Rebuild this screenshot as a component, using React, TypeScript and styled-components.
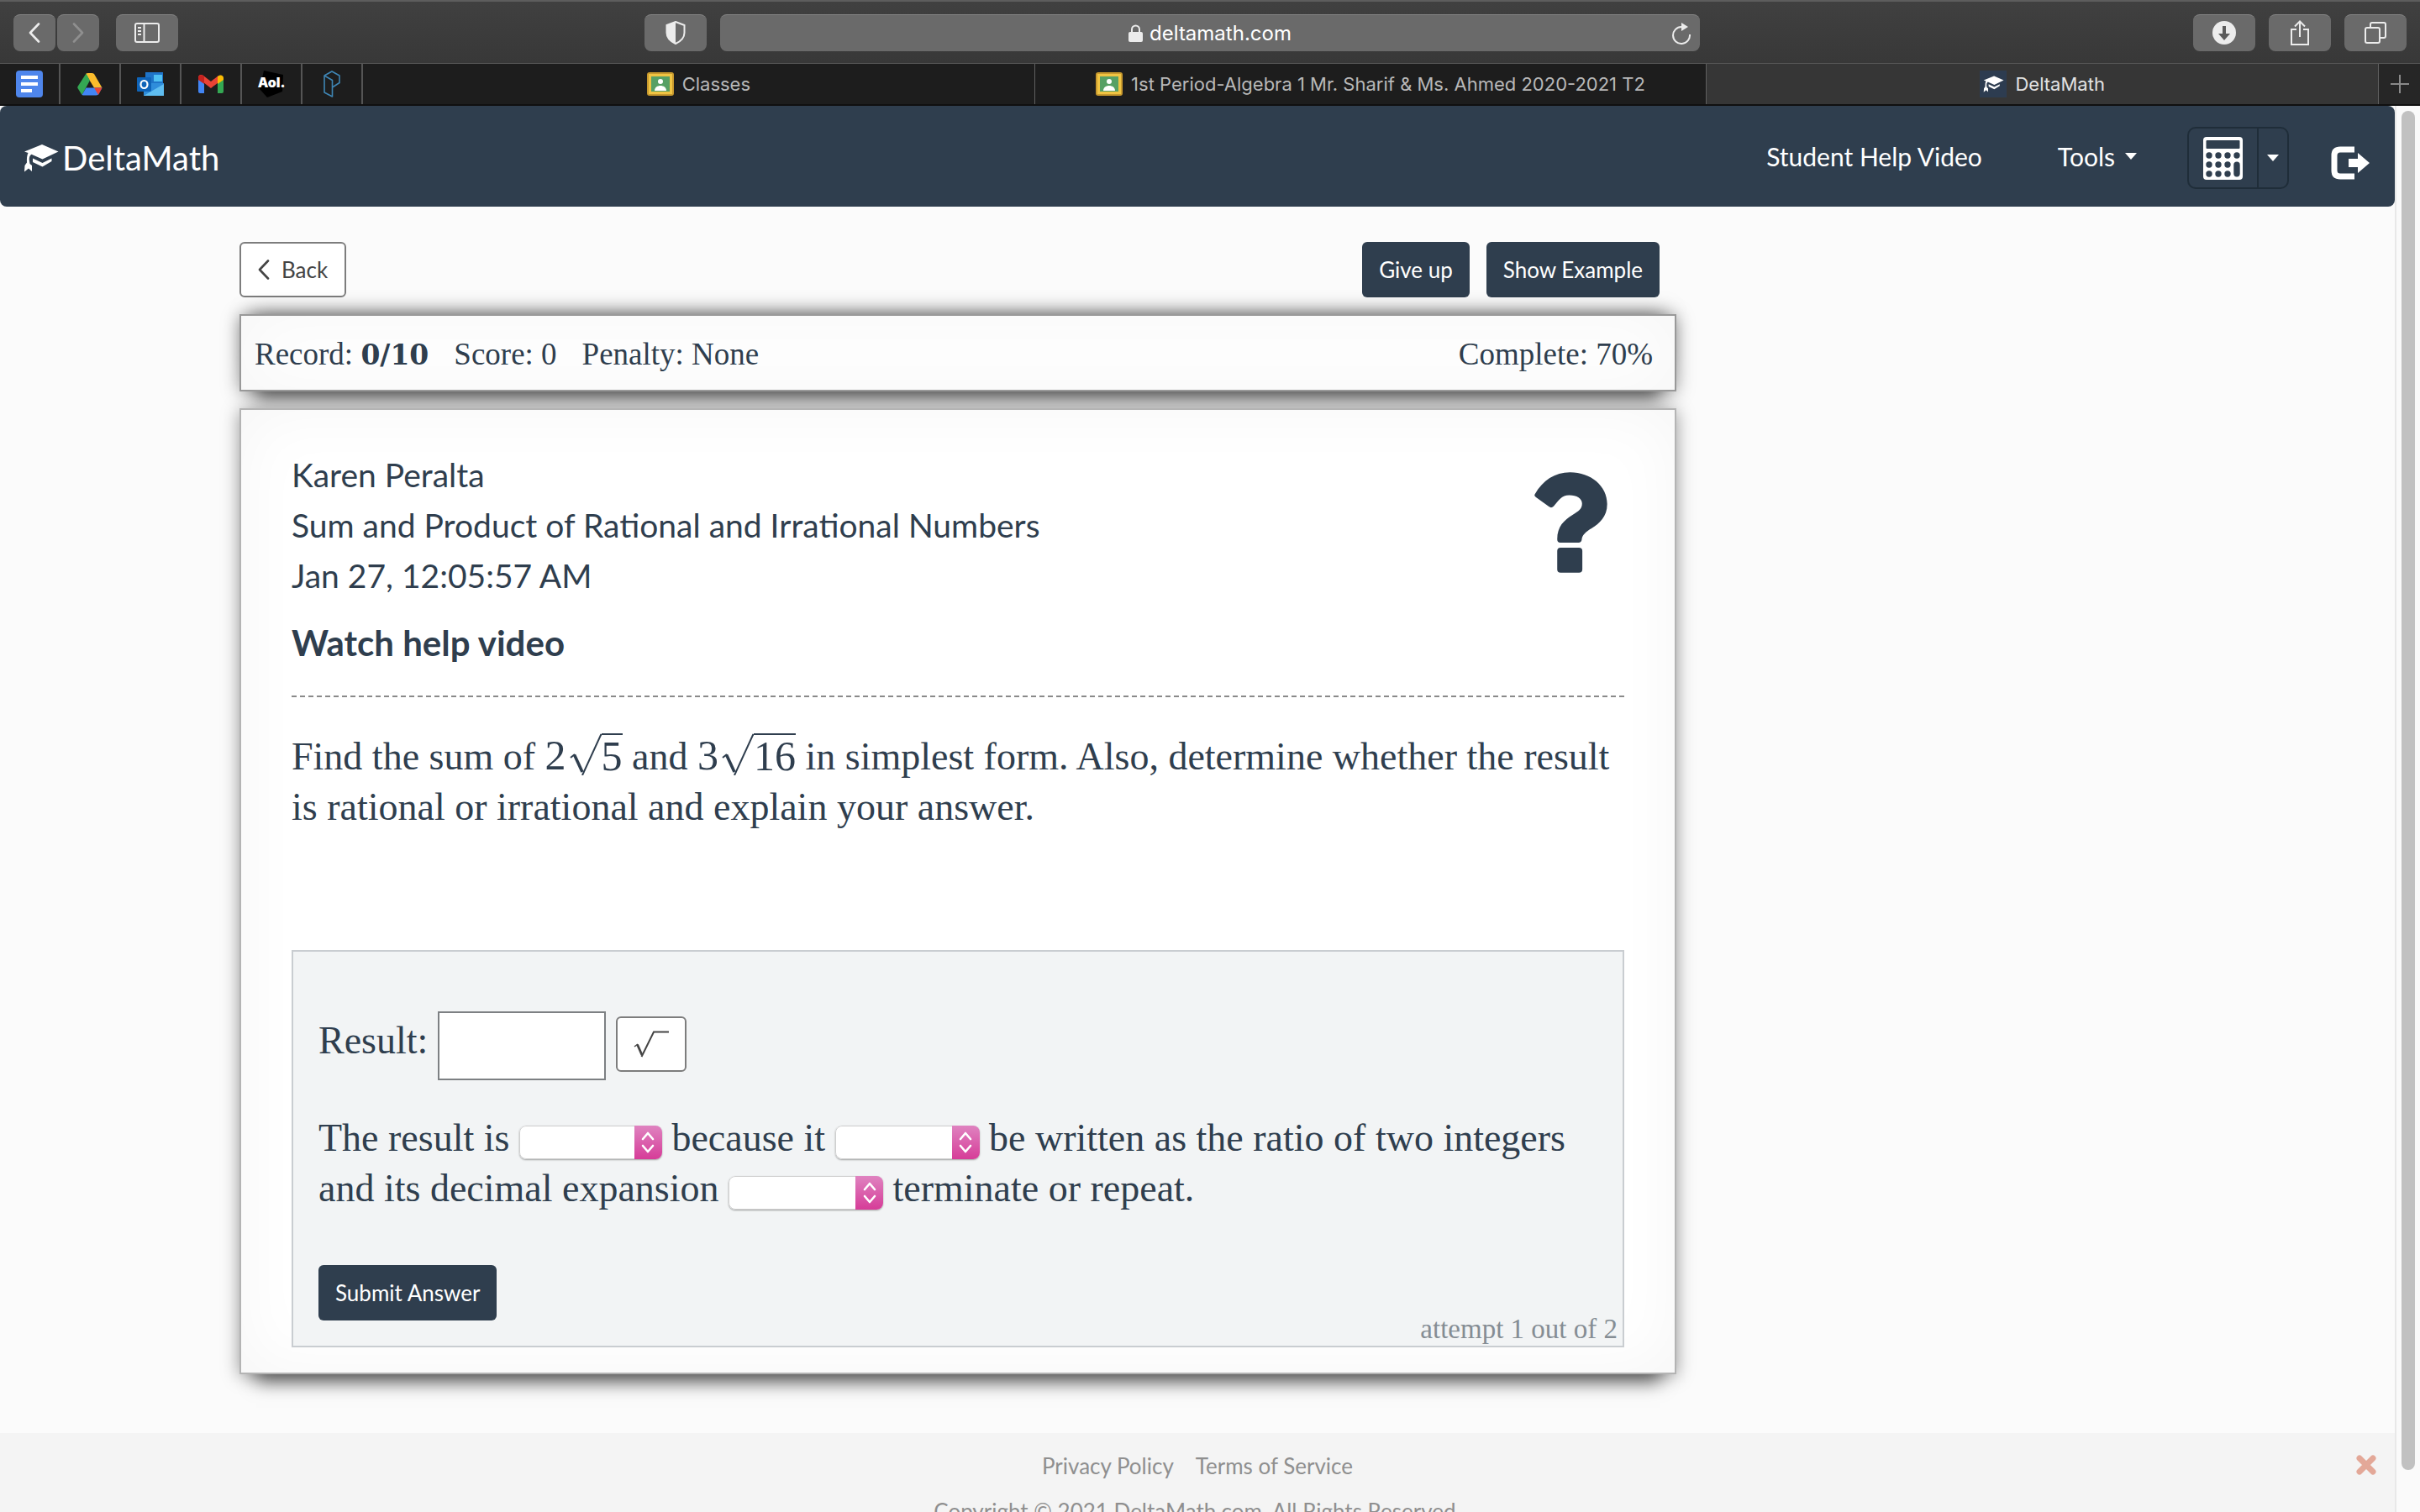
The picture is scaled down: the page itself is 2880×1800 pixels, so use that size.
import React from "react";
import styled, { createGlobalStyle } from "styled-components";

const navy = "#2f3e4e";
const sans = `Lato, "Liberation Sans", sans-serif`;
const serif = `"Liberation Serif", "DejaVu Serif", serif`;
const system = `Inter, "Liberation Sans", sans-serif`;

const GlobalStyle = createGlobalStyle`
  *, *::before, *::after { box-sizing: border-box; }
  body { margin: 0; font-family: ${sans}; color: ${navy}; background: #fbfbfb; }
  button, input, select { font: inherit; margin: 0; }
  svg { display: block; flex: none; }
  a { color: inherit; text-decoration: none; }
  p, h1 { margin: 0; font-weight: 400; }
`;

const Browser = styled.div`
  display: flex;
  flex-direction: column;
  height: 100vh;
  overflow: hidden;
`;

const Toolbar = styled.header`
  display: grid;
  grid-template-columns: 1fr auto 1fr;
  gap: 16px;
  align-items: center;
  padding: 0 16px;
  height: 76px;
  border-top: 2px solid #5d5d5d;
  border-bottom: 1px solid #565656;
  background: linear-gradient(#404040, #383838);
  font-family: ${system};
`;

const Group = styled.div<{ $gap: number; $end?: boolean }>`
  display: flex;
  align-items: center;
  gap: ${(p) => p.$gap}px;
  justify-content: ${(p) => (p.$end ? "flex-end" : "flex-start")};
`;

const Spacer = styled.span`
  flex: 1;
`;

const ToolButton = styled.button<{ $width: number }>`
  display: flex;
  align-items: center;
  justify-content: center;
  width: ${(p) => p.$width}px;
  height: 44px;
  padding: 0;
  border: 0;
  border-top: 1px solid #868686;
  border-radius: 8px;
  background: #6a6a6a;
  color: #ececec;
`;

const AddressBar = styled.div`
  display: grid;
  grid-template-columns: 1fr auto 1fr;
  align-items: center;
  width: 1166px;
  height: 44px;
  padding: 0 10px;
  border-top: 1px solid #868686;
  border-radius: 8px;
  background: #6a6a6a;
  color: #fff;
  font-size: 24px;
`;

const Reload = styled.button`
  justify-self: end;
  padding: 0;
  border: 0;
  background: none;
  color: #ececec;
`;

const TabBar = styled.nav`
  display: flex;
  height: 50px;
  border-bottom: 2px solid #101010;
  background: #1d1d1d;
  font-family: ${system};
  font-size: 22px;
`;

const PinnedTab = styled.a`
  display: flex;
  align-items: center;
  justify-content: center;
  width: 72px;
  border-right: 2px solid #555;
`;

const Tab = styled.a<{ $active?: boolean }>`
  display: flex;
  flex: 1;
  align-items: center;
  justify-content: center;
  gap: 10px;
  border-right: 1px solid #606060;
  background: ${(p) => (p.$active ? "#363636" : "transparent")};
  color: ${(p) => (p.$active ? "#e2e2e2" : "#b8b8b8")};
`;

const NewTab = styled.button`
  display: flex;
  align-items: center;
  justify-content: center;
  width: 49px;
  padding: 0;
  border: 0;
  background: #262626;
  color: #8a8a8a;
`;

const Viewport = styled.div`
  display: flex;
  flex: 1;
  min-height: 0;
`;

const Page = styled.div`
  display: flex;
  flex: 1;
  flex-direction: column;
  overflow: hidden;
`;

const ScrollTrack = styled.div`
  width: 30px;
  padding: 6px 6px 0 6px;
  border-left: 2px solid #e8e8e8;
  background: #fafafa;
`;

const ScrollThumb = styled.div`
  height: 97%;
  border-radius: 8px;
  background: #c1c1c1;
`;

const Navbar = styled.nav`
  display: flex;
  flex: none;
  align-items: center;
  height: 120px;
  padding: 0 30px 0 28px;
  border-radius: 8px;
  background: ${navy};
  color: #fff;
  font-size: 30px;
`;

const Brand = styled.a`
  display: flex;
  align-items: center;
  gap: 4px;
  margin-right: auto;
  padding-top: 4px;
  font-size: 40px;
`;

const NavLink = styled.a`
  display: flex;
  align-items: center;
  gap: 12px;
  margin-right: 90px;
`;

const ToolsLink = styled(NavLink)`
  margin-right: 60px;
`;

const CalcGroup = styled.div`
  display: flex;
  height: 74px;
  margin: 4px 50px 0 0;
  border: 2px solid #1f2d39;
  border-radius: 10px;
`;

const CalcButton = styled.button<{ $width: number }>`
  display: flex;
  align-items: center;
  justify-content: center;
  width: ${(p) => p.$width}px;
  padding: 0;
  border: 0;
  background: none;
  color: #fff;

  & + & { border-left: 2px solid #1f2d39; }
`;

const LogoutLink = styled.a`
  padding-top: 16px;
`;

const Content = styled.main`
  flex: none;
  width: 60%;
  margin: 42px 0 70px 10%;
`;

const Actions = styled.div`
  display: flex;
  gap: 20px;
  padding-right: 20px;
  margin-bottom: 20px;
`;

const Button = styled.button`
  height: 66px;
  padding: 0 20px;
  border: 0;
  border-radius: 6px;
  background: ${navy};
  color: #fff;
  font-family: ${sans};
  font-size: 26px;
  white-space: nowrap;
`;

const OutlineButton = styled(Button)`
  display: flex;
  align-items: center;
  gap: 14px;
  border: 2px solid #7d7d7d;
  background: #fff;
  color: #444;
`;

const BackButton = styled(OutlineButton)`
  margin-right: auto;
`;

const RecordBar = styled.section`
  position: relative;
  display: flex;
  align-items: center;
  gap: 30px;
  height: 92px;
  margin-bottom: 20px;
  padding: 3px 26px 0 16px;
  border: 2px solid #999;
  background: #fff;
  box-shadow: 0 30px 20px -20px rgba(0, 0, 0, 0.5), 0 -14px 24px -14px rgba(0, 0, 0, 0.5),
    0 2px 20px rgba(0, 0, 0, 0.4), 0 0 80px rgba(0, 0, 0, 0.04) inset;
  font-family: ${serif};
  font-size: 37px;
`;

const Tally = styled.b`
  font-family: "DejaVu Serif", serif;
  font-size: 33px;
`;

const Complete = styled.span`
  margin-left: auto;
`;

const Card = styled.section`
  position: relative;
  padding: 47px 60px 30px;
  border: 2px solid #b4b4b4;
  background: #fff;
  box-shadow: 0 30px 20px -20px rgba(0, 0, 0, 0.5), 0 2px 20px rgba(0, 0, 0, 0.4),
    0 0 80px rgba(0, 0, 0, 0.04) inset;
`;

const CardHeader = styled.div`
  display: flex;
  justify-content: space-between;
  padding-bottom: 33px;
  border-bottom: 2px dashed #8a8a8a;
  font-size: 39px;
  line-height: 60px;
`;

const Title = styled.h1`
  font-size: 39px;
`;

const HelpLink = styled.a`
  display: block;
  margin-top: 20px;
  font-size: 42px;
  font-weight: 700;
`;

const HelpButton = styled.button`
  align-self: flex-start;
  margin: 27px 20px 0 0;
  padding: 0;
  border: 0;
  background: none;
  color: ${navy};
`;

const Question = styled.p`
  margin: 41px 0 140px;
  font-family: ${serif};
  font-size: 46px;
  line-height: 60px;
`;

const MathTerm = styled.span`
  font-size: 50px;
  line-height: 50px;
  white-space: nowrap;
`;

const Radical = styled.span`
  display: inline-flex;
  align-items: flex-start;
  height: 50px;
  margin-left: 4px;
  vertical-align: -7px;
`;

const Radicand = styled.span`
  border-top: 2px solid ${navy};
`;

const AnswerBox = styled.form`
  border: 2px solid #c9cdd1;
  background: #f2f4f5;
  padding: 71px 6px 0 30px;
  font-family: ${serif};
  font-size: 46px;
  line-height: 60px;
`;

const ResultRow = styled.div`
  display: flex;
  align-items: flex-start;
  gap: 12px;
`;

const ResultLabel = styled.label`
  line-height: 70px;
`;

const ResultInput = styled.input`
  width: 200px;
  height: 82px;
  padding: 0 12px;
  border: 2px solid #7d8083;
  background: #fff;
`;

const RootButton = styled(OutlineButton)`
  width: 84px;
  margin-top: 6px;
  justify-content: center;
`;

const Sentence = styled.p`
  margin: 39px 0 61px;
`;

const SelectWrap = styled.span<{ $width: number }>`
  position: relative;
  display: inline-block;
  width: ${(p) => p.$width}px;
  height: 40px;
  vertical-align: -10px;
  border-radius: 8px;
  overflow: hidden;
  box-shadow: 0 1px 2px rgba(0, 0, 0, 0.35);
`;

const Select = styled.select`
  display: block;
  width: 100%;
  height: 100%;
  padding: 0 40px 0 10px;
  border: 1px solid #cfcfcf;
  border-radius: 8px;
  appearance: none;
  background: #fff;
  font-size: 24px;
`;

const SelectArrows = styled.span`
  position: absolute;
  inset: 0 0 0 auto;
  display: flex;
  align-items: center;
  justify-content: center;
  width: 33px;
  background: linear-gradient(#df83c0, #d63c98);
  pointer-events: none;
`;

const AnswerFooter = styled.div`
  display: flex;
  justify-content: space-between;
  height: 96px;
`;

const Attempt = styled.span`
  align-self: flex-end;
  color: #858d94;
  font-size: 33px;
  line-height: 40px;
`;

const Footer = styled.footer`
  display: grid;
  flex: 1;
  grid-template-columns: 1fr auto 1fr;
  align-items: start;
  padding: 12px 22px 0;
  background: #f4f4f4;
  color: #8f8f8f;
  font-size: 26px;
  line-height: 54px;
  text-align: center;
`;

const LegalLinks = styled.div`
  display: flex;
  justify-content: center;
  gap: 26px;
`;

const CloseButton = styled.button`
  justify-self: end;
  margin-top: 14px;
  padding: 0;
  border: 0;
  background: none;
  color: #e3a898;
`;

function Caret() {
  return (
    <svg width="14" height="8" viewBox="0 0 16 9" fill="currentColor" aria-hidden="true">
      <path d="M0 0h16L8 9z" />
    </svg>
  );
}

function Chevron({ flip, dim }: { flip?: boolean; dim?: boolean }) {
  return (
    <svg width="14" height="24" viewBox="0 0 14 24" fill="none" stroke={dim ? "#8f8f8f" : "currentColor"} strokeWidth="2.6" strokeLinecap="round" strokeLinejoin="round" aria-hidden="true">
      <path d={flip ? "M2 1.5 12 12 2 22.5" : "M12 1.5 2 12 12 22.5"} />
    </svg>
  );
}

function CapIcon({ width, height }: { width: number; height: number }) {
  return (
    <svg width={width} height={height} viewBox="0 0 42 34" fill="#fff" aria-hidden="true">
      <path d="M22 1 41.500 9.500 22.500 18.500 9.500 12.800Q6.500 14.500 6.800 19.500L7.500 24 10 26V33L6 29.500 1 33.500 1.500 26 4 22.500Q3.500 15 5.500 11L1 9.500z" />
      <path d="M11 17.500 22.500 23 33.500 17.500V21L22.500 27.500 11 22z" />
    </svg>
  );
}

function QuestionIcon() {
  return (
    <svg width="87" height="120" viewBox="797 876 262 360" fill="currentColor" aria-hidden="true">
      <path d="M799 954C828 905 870 876 925 876C1000 876 1058 925 1058 990C1058 1036 1030 1060 1002 1077C980 1090 968 1102 967 1117Q966 1128 955 1128H890Q879 1128 879 1116C879 1070 903 1048 935 1028C955 1015 968 1008 968 988C968 970 950 958 922 958C895 958 884 977 866 998Q858 1006 849 999L803 966Q795 961 799 954z" />
      <rect x="879" y="1146" width="90" height="90" rx="12" />
    </svg>
  );
}

function RootSign() {
  return (
    <svg width="38" height="50" viewBox="0 0 38 50" fill="none" stroke={navy} aria-hidden="true">
      <path d="M1 29 6 25" strokeWidth="2" />
      <path d="M5.500 25.500 15 46" strokeWidth="3.600" />
      <path d="M15 50 37.500 1" strokeWidth="2" />
    </svg>
  );
}

function RootKeyIcon() {
  return (
    <svg width="42" height="32" viewBox="0 0 42 32" fill="none" stroke="#444" aria-hidden="true">
      <path d="M1 19 5 16" strokeWidth="1.500" />
      <path d="M4.500 16.500 10 29" strokeWidth="2.800" />
      <path d="M9.500 31 24 1.500H42" strokeWidth="2" />
    </svg>
  );
}

function Root({ factor, radicand }: { factor: number; radicand: number }) {
  return (
    <MathTerm>
      {factor}
      <Radical>
        <RootSign />
        <Radicand>{radicand}</Radicand>
      </Radical>
    </MathTerm>
  );
}

function Choice({ label, width }: { label: string; width: number }) {
  return (
    <SelectWrap $width={width}>
      <Select aria-label={label} defaultValue="">
        <option value="" />
      </Select>
      <SelectArrows>
        <svg width="16" height="26" viewBox="0 0 16 26" fill="none" stroke="#fff" strokeWidth="2.600" strokeLinecap="round" strokeLinejoin="round" aria-hidden="true">
          <path d="M2 9 8 2l6 7M2 17l6 7 6-7" />
        </svg>
      </SelectArrows>
    </SelectWrap>
  );
}

function ClassroomIcon() {
  return (
    <svg width="32" height="28" viewBox="0 0 32 28" aria-hidden="true">
      <rect width="32" height="28" rx="3" fill="#c99a2e" />
      <rect x="2" y="2" width="28" height="24" fill="#f0c443" />
      <rect x="5" y="5" width="22" height="18" fill="#57a065" />
      <circle cx="16" cy="11" r="3" fill="#fff" />
      <path d="M9 22c0-8 14-8 14 0z" fill="#fff" />
    </svg>
  );
}

function PinnedTabs() {
  return (
    <>
      <PinnedTab href="#docs" aria-label="Docs">
        <svg width="32" height="32" viewBox="0 0 32 32"><rect width="32" height="32" rx="4" fill="#4f86ec" /><path d="M6 8h20M6 16h20M6 24h13" stroke="#fff" strokeWidth="4" /></svg>
      </PinnedTab>
      <PinnedTab href="#drive" aria-label="Drive">
        <svg width="30" height="27" viewBox="0 0 30 27"><path d="M10 1Q11 0 13 0h4q2 0 3 1l9.500 16.500H20z" fill="#fbbc2c" /><path d="M10.500 .500 15 8.700 5.500 26 .500 18Q0 17 .500 16z" fill="#34a853" /><path d="M5.500 26 10.500 17.500H29.500L25 25.500Q24 26.500 22 26.500H7z" fill="#4285f4" /><path d="M20 17.500H29.500L25 26z" fill="#ea4335" /></svg>
      </PinnedTab>
      <PinnedTab href="#outlook" aria-label="Outlook">
        <svg width="32" height="28" viewBox="0 0 32 28"><path d="M10 0h21v18H10z" fill="#1f74c8" /><path d="M20 3h10v8H20z" fill="#4fc0f2" /><path d="M8 13h24v15H8z" fill="#2f8ddb" /><path d="M8 28 32 14v14z" fill="#5fbdf0" /><rect y="6" width="17" height="17" rx="1" fill="#0f64b8" /><ellipse cx="8.500" cy="14.500" rx="4" ry="4.500" fill="none" stroke="#fff" strokeWidth="2.200" /></svg>
      </PinnedTab>
      <PinnedTab href="#gmail" aria-label="Gmail">
        <svg width="30" height="22" viewBox="0 0 30 22"><path d="M0 3v17a2 2 0 0 0 2 2h5V8z" fill="#4285f4" /><path d="M30 3v17a2 2 0 0 1-2 2h-5V8z" fill="#34a853" /><path d="M0 3.500C0 0 3.500-1 6 1l9 7 9-7v8l-9 7-9-7-6-4z" fill="#ea4335" /><path d="M23 2c3-3 7-1.500 7 2v2l-7 5z" fill="#fbbc04" /><path d="M0 3.500C0 0 4-1 7 2v9L0 6z" fill="#c5221f" /></svg>
      </PinnedTab>
      <PinnedTab href="#aol" aria-label="Aol">
        <svg width="34" height="32" viewBox="0 0 34 32"><path d="M8 0 31 5 30 25 12 32 3 22z" fill="#000" /><text x="17" y="20" fill="#fff" fontFamily="Inter, sans-serif" fontSize="16" fontWeight="900" textAnchor="middle">Aol.</text></svg>
      </PinnedTab>
      <PinnedTab href="#portal" aria-label="Portal">
        <svg width="20" height="32" viewBox="0 0 20 32" fill="none" stroke="#3f86b5" strokeWidth="1.600" strokeLinejoin="round"><path d="M1 6 10 1 19 6V14.500L10.500 20M1 6 10.500 11.500V31L1 26z" /></svg>
      </PinnedTab>
    </>
  );
}

function BrowserChrome() {
  return (
    <>
      <Toolbar>
        <Group $gap={20}>
          <Group $gap={2}>
            <ToolButton $width={50} aria-label="Back"><Chevron /></ToolButton>
            <ToolButton $width={50} aria-label="Forward"><Chevron flip dim /></ToolButton>
          </Group>
          <ToolButton $width={74} aria-label="Sidebar">
            <svg width="30" height="24" viewBox="0 0 30 24" fill="none" stroke="currentColor" strokeWidth="2"><rect x="1" y="1" width="28" height="22" rx="2" /><path d="M11.500 1v22M4 6h4M4 10h4M4 14h4" /></svg>
          </ToolButton>
          <Spacer />
          <ToolButton $width={74} aria-label="Privacy report">
            <svg width="24" height="28" viewBox="0 0 24 28"><path d="M12 1 22.500 5V14c0 6-4 10-10.500 13C5.500 24 1.500 20 1.500 14V5z" fill="none" stroke="currentColor" strokeWidth="2" /><path d="M12 1v26C5.500 24 1.500 20 1.500 14V5z" fill="currentColor" /></svg>
          </ToolButton>
        </Group>
        <AddressBar>
          <span />
          <Group $gap={8}>
            <svg width="17" height="21" viewBox="0 0 17 21" aria-hidden="true"><rect y="9" width="17" height="12" rx="2" fill="#ececec" /><path d="M4 10V6a4.500 4.500 0 0 1 9 0v4" fill="none" stroke="#ececec" strokeWidth="2" /></svg>
            <span>deltamath.com</span>
          </Group>
          <Reload aria-label="Reload">
            <svg width="24" height="27" viewBox="0 0 24 27" fill="none" stroke="currentColor" strokeWidth="2"><path d="M14 6H12A10 10 0 1 0 22 15" /><path d="M12 1 20 6 12 11z" fill="currentColor" stroke="none" /></svg>
          </Reload>
        </AddressBar>
        <Group $gap={16} $end>
          <ToolButton $width={74} aria-label="Downloads">
            <svg width="28" height="28" viewBox="0 0 28 28"><circle cx="14" cy="14" r="14" fill="currentColor" /><path d="M12 6h4v9h5l-7 8-7-8h5z" fill="#5c5c5c" /></svg>
          </ToolButton>
          <ToolButton $width={74} aria-label="Share">
            <svg width="22" height="30" viewBox="0 0 22 30" fill="none" stroke="currentColor" strokeWidth="2"><path d="M7 11H1v18h20V11h-6M11 20V2M5 7.500 11 1.500 17 7.500" /></svg>
          </ToolButton>
          <ToolButton $width={74} aria-label="Tab overview">
            <svg width="26" height="26" viewBox="0 0 26 26" fill="none" stroke="currentColor" strokeWidth="2"><rect x="1" y="7" width="17" height="18" rx="2" /><path d="M7 7V3a2 2 0 0 1 2-2h14a2 2 0 0 1 2 2v14a2 2 0 0 1-2 2h-5" /></svg>
          </ToolButton>
        </Group>
      </Toolbar>
      <TabBar aria-label="Tabs">
        <PinnedTabs />
        <Tab href="#classes"><ClassroomIcon />Classes</Tab>
        <Tab href="#algebra"><ClassroomIcon />1st Period-Algebra 1 Mr. Sharif &amp; Ms. Ahmed 2020-2021 T2</Tab>
        <Tab href="#deltamath" $active>
          <svg width="32" height="32" viewBox="0 0 32 32" aria-hidden="true"><rect width="32" height="32" fill="#2d3c50" /><svg x="4" y="6" width="25" height="20"><CapIcon width={25} height={20} /></svg></svg>
          DeltaMath
        </Tab>
        <NewTab aria-label="New tab">
          <svg width="22" height="22" viewBox="0 0 22 22" stroke="currentColor" strokeWidth="2"><path d="M11 0v22M0 11h22" /></svg>
        </NewTab>
      </TabBar>
    </>
  );
}

function CalculatorIcon() {
  const keys = [[7, 22], [18, 22], [29, 22], [40, 22], [7, 33], [18, 33], [29, 33], [7, 44], [18, 44], [29, 44]];
  return (
    <svg width="47" height="51" viewBox="0 0 47 51" aria-hidden="true">
      <rect width="47" height="51" rx="4" fill="#fff" />
      <rect x="3.500" y="4" width="40" height="10" rx="1" fill={navy} />
      {keys.map(([x, y]) => (
        <circle key={`${x}-${y}`} cx={x} cy={y} r="3.700" fill={navy} />
      ))}
      <rect x="36.300" y="29.500" width="7.400" height="18" rx="3.700" fill={navy} />
    </svg>
  );
}

export default function App() {
  return (
    <Browser>
      <GlobalStyle />
      <BrowserChrome />
      <Viewport>
        <Page>
          <Navbar>
            <Brand href="#home"><CapIcon width={42} height={34} />DeltaMath</Brand>
            <NavLink href="#help">Student Help Video</NavLink>
            <ToolsLink href="#tools">Tools <Caret /></ToolsLink>
            <CalcGroup>
              <CalcButton $width={81} aria-label="Calculator"><CalculatorIcon /></CalcButton>
              <CalcButton $width={36} aria-label="Calculator options"><Caret /></CalcButton>
            </CalcGroup>
            <LogoutLink href="#logout" aria-label="Log out">
              <svg width="46" height="40" viewBox="0 0 46 40" aria-hidden="true">
                <path d="M28 4H11Q4 4 4 11V29Q4 36 11 36H28" fill="none" stroke="#fff" strokeWidth="7" />
                <path d="M21 15H32V8L46 20 32 32V25H21z" fill="#fff" />
              </svg>
            </LogoutLink>
          </Navbar>

          <Content>
            <Actions>
              <BackButton><Chevron />Back</BackButton>
              <Button>Give up</Button>
              <Button>Show Example</Button>
            </Actions>

            <RecordBar>
              <span>Record: <Tally>0/10</Tally></span>
              <span>Score: 0</span>
              <span>Penalty: None</span>
              <Complete>Complete: 70%</Complete>
            </RecordBar>

            <Card>
              <CardHeader>
                <div>
                  <p>Karen Peralta</p>
                  <Title>Sum and Product of Rational and Irrational Numbers</Title>
                  <p>Jan 27, 12:05:57 AM</p>
                  <HelpLink href="#video">Watch help video</HelpLink>
                </div>
                <HelpButton aria-label="Help"><QuestionIcon /></HelpButton>
              </CardHeader>

              <Question>
                Find the sum of <Root factor={2} radicand={5} /> and <Root factor={3} radicand={16} /> in simplest form.
                Also, determine whether the result
                <br />
                is rational or irrational and explain your answer.
              </Question>

              <AnswerBox onSubmit={(e) => e.preventDefault()}>
                <ResultRow>
                  <ResultLabel htmlFor="result">Result:</ResultLabel>
                  <ResultInput id="result" type="text" />
                  <RootButton type="button" aria-label="Square root">
                    <RootKeyIcon />
                  </RootButton>
                </ResultRow>
                <Sentence>
                  The result is <Choice label="Rational or irrational" width={170} /> because it{" "}
                  <Choice label="Can or cannot" width={172} /> be written as the ratio of two integers
                  <br />
                  and its decimal expansion <Choice label="Does or does not" width={184} /> terminate or repeat.
                </Sentence>
                <AnswerFooter>
                  <Button type="submit">Submit Answer</Button>
                  <Attempt>attempt 1 out of 2</Attempt>
                </AnswerFooter>
              </AnswerBox>
            </Card>
          </Content>

          <Footer>
            <span />
            <div>
              <LegalLinks>
                <a href="#privacy">Privacy Policy</a>
                <a href="#terms">Terms of Service</a>
              </LegalLinks>
              <p>Copyright © 2021 DeltaMath.com. All Rights Reserved.</p>
            </div>
            <CloseButton aria-label="Close">
              <svg width="24" height="24" viewBox="0 0 24 24" stroke="currentColor" strokeWidth="7" strokeLinecap="round" aria-hidden="true">
                <path d="M4 4 20 20M20 4 4 20" />
              </svg>
            </CloseButton>
          </Footer>
        </Page>
        <ScrollTrack><ScrollThumb /></ScrollTrack>
      </Viewport>
    </Browser>
  );
}
